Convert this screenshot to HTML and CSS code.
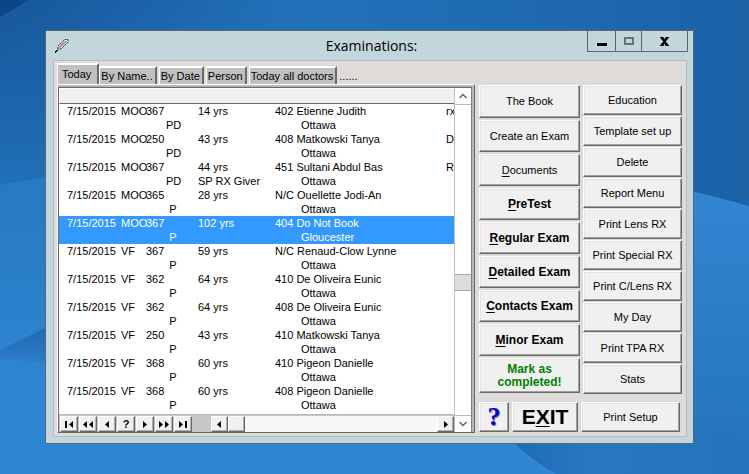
FILE: index.html
```html
<!DOCTYPE html>
<html lang="en">
<head>
<meta charset="utf-8">
<title>Examinations</title>
<link rel="stylesheet" href="styles.css">
</head>
<body>
<svg class="wallpaper" viewBox="0 0 749 474" preserveAspectRatio="none" aria-hidden="true">
  <defs>
    <linearGradient id="sky" x1="0" y1="0" x2="0" y2="1"><stop offset="0" stop-color="#17569a"/><stop offset=".38" stop-color="#2070b8"/><stop offset=".75" stop-color="#2d84d0"/><stop offset="1" stop-color="#2f87d3"/></linearGradient>
    <linearGradient id="top" x1="0" y1="0" x2="1" y2="0"><stop offset="0" stop-color="#2270b8" stop-opacity="0"/><stop offset=".4" stop-color="#2272ba"/><stop offset="1" stop-color="#1b62a7"/></linearGradient>
    <linearGradient id="right" x1="0" y1="0" x2="0" y2="1"><stop offset="0" stop-color="#3387d2"/><stop offset="1" stop-color="#2373bc"/></linearGradient>
    <linearGradient id="fold" x1="0" y1="0" x2="1" y2="0"><stop offset="0" stop-color="#1e69b2"/><stop offset=".35" stop-color="#2777c2"/><stop offset="1" stop-color="#2474bc"/></linearGradient>
    <linearGradient id="wedge" x1="0" y1="0" x2="0" y2="1"><stop offset="0" stop-color="#1b65ac"/><stop offset="1" stop-color="#2b7ec9"/></linearGradient>
  </defs>
  <rect width="749" height="474" fill="url(#sky)"/>
  <path d="M0 0H749V220H600V60H0Z" fill="url(#top)"/>
  <path d="M0 0H29L0 17Z" fill="#0d4686"/>
  <path d="M0 185L60 175V325L0 350Z" fill="#2d83ce" opacity=".5"/>
  <path d="M0 350L60 321V363L0 359Z" fill="url(#wedge)"/>
  <path d="M600 168Q690 190 749 206V474H600Z" fill="url(#right)"/>
  <path d="M500 430Q530 460 556 474H749V436Q690 428 650 428Z" fill="url(#fold)"/>
</svg>

<main class="window">
  <header class="titlebar">
    <svg class="pen" viewBox="0 0 14 14" aria-hidden="true">
      <path d="M0 14V12H1V11H3V12H2V13H1V14Z" fill="#111"/>
      <path d="M3 10V7L10 0.5H13V3L6 10Z" fill="#e6e4df" stroke="#222" stroke-width="1" stroke-dasharray="2 1"/>
      <path d="M4 9.500L11.500 2M5 7.500L10 2.500" stroke="#766e68"/>
    </svg>
    <h1>Examinations:</h1>
    <div class="controls">
      <button class="control minimize" aria-label="Minimize"><svg viewBox="0 0 10 10"><path d="M0 5h10v3H0z"/></svg></button>
      <button class="control maximize" aria-label="Maximize"><svg viewBox="0 0 10 10"><path d="M1 2h8v6H1z" fill="none" stroke="#66737a" stroke-width="2"/></svg></button>
      <button class="control close" aria-label="Close"><svg viewBox="0 0 10 10"><path d="M1 1h3l1 2 1-2h3v1H8v1L6 5l2 2v1h1v1H6L5 7 4 9H1V8h1V7l2-2-2-2V2H1z"/></svg></button>
    </div>
  </header>

  <section class="panel">
    <div class="left">
      <nav class="tabs">
        <button class="tab active">Today</button>
        <button class="tab">By Name..</button>
        <button class="tab">By Date</button>
        <button class="tab">Person</button>
        <button class="tab">Today all doctors</button>
        <span class="dots">......</span>
      </nav>
      <div class="pane">
        <div class="browser">
          <div class="content">
            <div class="list-head"></div>
            <table class="records">
              <colgroup><col class="c-date"><col class="c-doc"><col class="c-room"><col class="c-code"><col class="c-age"><col class="c-name"><col class="c-note"></colgroup>
              <tbody>
                <tr><td>7/15/2015</td><td>MOO</td><td>367</td><td></td><td>14 yrs</td><td>402 Etienne Judith</td><td>rx</td></tr>
                <tr><td></td><td></td><td></td><td>PD</td><td></td><td class="city">Ottawa</td><td></td></tr>
              </tbody>
              <tbody>
                <tr><td>7/15/2015</td><td>MOO</td><td>250</td><td></td><td>43 yrs</td><td>408 Matkowski Tanya</td><td>D</td></tr>
                <tr><td></td><td></td><td></td><td>PD</td><td></td><td class="city">Ottawa</td><td></td></tr>
              </tbody>
              <tbody>
                <tr><td>7/15/2015</td><td>MOO</td><td>367</td><td></td><td>44 yrs</td><td>451 Sultani Abdul Bas</td><td>R</td></tr>
                <tr><td></td><td></td><td></td><td>PD</td><td>SP RX Giver</td><td class="city">Ottawa</td><td></td></tr>
              </tbody>
              <tbody>
                <tr><td>7/15/2015</td><td>MOO</td><td>365</td><td></td><td>28 yrs</td><td>N/C Ouellette Jodi-An</td><td></td></tr>
                <tr><td></td><td></td><td></td><td>P</td><td></td><td class="city">Ottawa</td><td></td></tr>
              </tbody>
              <tbody class="selected">
                <tr><td>7/15/2015</td><td>MOO</td><td>367</td><td></td><td>102 yrs</td><td>404 Do Not Book</td><td></td></tr>
                <tr><td></td><td></td><td></td><td>P</td><td></td><td class="city">Gloucester</td><td></td></tr>
              </tbody>
              <tbody>
                <tr><td>7/15/2015</td><td>VF</td><td>367</td><td></td><td>59 yrs</td><td>N/C Renaud-Clow Lynne</td><td></td></tr>
                <tr><td></td><td></td><td></td><td>P</td><td></td><td class="city">Ottawa</td><td></td></tr>
              </tbody>
              <tbody>
                <tr><td>7/15/2015</td><td>VF</td><td>362</td><td></td><td>64 yrs</td><td>410 De Oliveira Eunic</td><td></td></tr>
                <tr><td></td><td></td><td></td><td>P</td><td></td><td class="city">Ottawa</td><td></td></tr>
              </tbody>
              <tbody>
                <tr><td>7/15/2015</td><td>VF</td><td>362</td><td></td><td>64 yrs</td><td>408 De Oliveira Eunic</td><td></td></tr>
                <tr><td></td><td></td><td></td><td>P</td><td></td><td class="city">Ottawa</td><td></td></tr>
              </tbody>
              <tbody>
                <tr><td>7/15/2015</td><td>VF</td><td>250</td><td></td><td>43 yrs</td><td>410 Matkowski Tanya</td><td></td></tr>
                <tr><td></td><td></td><td></td><td>P</td><td></td><td class="city">Ottawa</td><td></td></tr>
              </tbody>
              <tbody>
                <tr><td>7/15/2015</td><td>VF</td><td>368</td><td></td><td>60 yrs</td><td>410 Pigeon Danielle</td><td></td></tr>
                <tr><td></td><td></td><td></td><td>P</td><td></td><td class="city">Ottawa</td><td></td></tr>
              </tbody>
              <tbody>
                <tr><td>7/15/2015</td><td>VF</td><td>368</td><td></td><td>60 yrs</td><td>408 Pigeon Danielle</td><td></td></tr>
                <tr><td></td><td></td><td></td><td>P</td><td></td><td class="city">Ottawa</td><td></td></tr>
              </tbody>
            </table>
            <div class="navbar">
              <button class="nav" aria-label="First"><svg viewBox="0 0 10 7"><path d="M1 0h2v7H1zM9 0v7L5 3.500z"/></svg></button>
              <button class="nav" aria-label="Page up"><svg viewBox="0 0 10 7"><path d="M4 0v7L0 3.500zM10 0v7L6 3.500z"/></svg></button>
              <button class="nav" aria-label="Previous"><svg viewBox="0 0 10 7"><path d="M7 0v7L3 3.500z"/></svg></button>
              <button class="nav">?</button>
              <button class="nav" aria-label="Next"><svg viewBox="0 0 10 7"><path d="M3 0v7l4-3.500z"/></svg></button>
              <button class="nav" aria-label="Page down"><svg viewBox="0 0 10 7"><path d="M0 0v7l4-3.500zM6 0v7l4-3.500z"/></svg></button>
              <button class="nav" aria-label="Last"><svg viewBox="0 0 10 7"><path d="M1 0v7l4-3.500zM7 0h2v7H7z"/></svg></button>
              <div class="hscroll">
                <button class="nav" aria-label="Scroll left"><svg viewBox="0 0 10 7"><path d="M6 0v7L2 3.500z"/></svg></button>
                <div class="nav"></div>
                <button class="nav end" aria-label="Scroll right"><svg viewBox="0 0 10 7"><path d="M3 0v7l4-3.500z"/></svg></button>
              </div>
            </div>
          </div>
          <div class="vscroll">
            <button class="arrow up" aria-label="Scroll up"><svg viewBox="0 0 8 6"><path d="M0.500 5L4 1.500L7.500 5"/></svg></button>
            <div class="before"></div>
            <div class="thumb"></div>
            <div class="after"></div>
            <button class="arrow down" aria-label="Scroll down"><svg viewBox="0 0 8 6"><path d="M0.500 1L4 4.500L7.500 1"/></svg></button>
          </div>
        </div>
      </div>
    </div>

    <div class="actions">
      <div class="columns">
        <div class="exams">
          <button class="btn">The Book</button>
          <button class="btn">Create an Exam</button>
          <button class="btn"><span><u>D</u>ocuments</span></button>
          <button class="btn bold"><span><u>P</u>reTest</span></button>
          <button class="btn bold"><span><u>R</u>egular Exam</span></button>
          <button class="btn bold"><span><u>D</u>etailed Exam</span></button>
          <button class="btn bold"><span><u>C</u>ontacts Exam</span></button>
          <button class="btn bold"><span><u>M</u>inor Exam</span></button>
          <button class="btn bold mark">Mark as<br>completed!</button>
        </div>
        <div class="tools">
          <button class="btn">Education</button>
          <button class="btn">Template set up</button>
          <button class="btn">Delete</button>
          <button class="btn">Report Menu</button>
          <button class="btn">Print Lens RX</button>
          <button class="btn">Print Special RX</button>
          <button class="btn">Print C/Lens RX</button>
          <button class="btn">My Day</button>
          <button class="btn">Print TPA RX</button>
          <button class="btn">Stats</button>
        </div>
      </div>
      <div class="footer">
        <button class="btn help">?</button>
        <button class="btn exit"><span>E<u>X</u>IT</span></button>
        <button class="btn setup">Print Setup</button>
      </div>
    </div>
  </section>
</main>
</body>
</html>
```
FILE: styles.css
```css
* { box-sizing: border-box; }

body {
  margin: 0;
  padding: 30px 55px 30px 45px;
  background: #2d84d0;
  color: #000;
  font: 11px/14px "Liberation Sans", Arial, sans-serif;
}

button {
  margin: 0;
  padding: 0;
  color: inherit;
  font: inherit;
}

.wallpaper {
  position: fixed;
  inset: 0;
  z-index: -1;
  width: 100%;
  height: 100%;
}

.window {
  border: 1px solid #596670;
  background: #c3d6dc;
}

/* Title bar */
.titlebar {
  display: grid;
  grid-template-columns: 1fr auto 1fr;
  height: 29px;
  padding: 0 5px 0 9px;
}

.pen {
  width: 14px;
  height: 14px;
  margin-top: 8px;
}

h1 {
  margin: 0;
  font: 14px/30px "Open Sans", "Noto Sans", sans-serif;
}

.controls {
  display: flex;
  justify-self: end;
  height: 21px;
}

.control {
  display: flex;
  align-items: center;
  justify-content: center;
  border: solid #596670;
  border-width: 0 0 1px 1px;
  background: none;
}

.control svg { width: 10px; height: 10px; }
.minimize { width: 28px; }
.maximize { width: 26px; }
.close { width: 47px; border-right-width: 1px; }
.minimize svg { height: 10px; margin-top: 4px; }
.close svg { width: 11px; height: 11px; }

.panel {
  display: flex;
  gap: 4px;
  margin: 0 6px 6px 7px;
  padding: 2px 4px 3px 3px;
  border: 1px solid #b1bdca;
  background: #dfdbd8;
}

.left {
  flex: 1;
  min-width: 0;
}

/* Tabs */
.tabs {
  display: flex;
  align-items: flex-end;
  gap: 2px;
  height: 21px;
}

.tab {
  height: 18px;
  padding: 0 2px 1px 1px;
  border: solid #fff;
  border-width: 2px 2px 0 1px;
  border-right-color: #696969;
  background: #c0c0c0;
  line-height: 14px;
  white-space: nowrap;
}

.tab.active {
  height: 21px;
  margin-right: -2px;
  padding: 0 6px 2px 4px;
}

.dots { line-height: 16px; }

/* Record list */
.pane {
  padding: 2px 2px 0 0;
  border: 1px solid #fff;
  border-right-color: #696969;
  border-bottom-color: #696969;
  background: #b8b8b8;
}

.browser {
  display: flex;
  border: solid #696969;
  border-width: 1px 1px 0 1px;
  border-right-color: #808080;
  background: #fff;
}

.content {
  flex: 1;
  min-width: 0;
}

.list-head {
  height: 16px;
  border: solid #fff;
  border-width: 1px 0 1px 1px;
  border-bottom-color: #696969;
  background: #f0f0f0;
}

.records {
  width: 100%;
  table-layout: fixed;
  border-collapse: collapse;
}

.c-date { width: 62px; }
.c-doc { width: 25px; }
.c-room { width: 20px; }
.c-code { width: 14px; }
.c-age { width: 95px; }
.c-note { width: 8px; }

.records td {
  height: 14px;
  padding: 0;
  overflow: hidden;
  white-space: nowrap;
}

.records td:first-child { padding-left: 8px; }
.records td:nth-child(2) { overflow: visible; }
.records td:nth-child(4) { text-align: center; overflow: visible; }
.records td:nth-child(5) { padding-left: 18px; }
.records .city { padding-left: 26px; }

.selected { background: #3399ff; color: #fff; }

.navbar {
  display: flex;
  gap: 1px;
  height: 18px;
  margin-top: 2px;
  padding: 1px 0 0 1px;
  border-top: 1px solid #b8b8b8;
  background: #c6c6c6;
}

.nav {
  display: flex;
  align-items: center;
  justify-content: center;
  width: 18px;
  border: 1px solid #fff;
  border-right-color: #696969;
  border-bottom-color: #696969;
  background: #f0f0f0;
  box-shadow: inset -1px -1px #b0b0b0;
  font-weight: bold;
}

.nav svg { width: 10px; height: 7px; }

.hscroll {
  display: flex;
  flex: 1;
  margin-left: 18px;
  background: repeating-conic-gradient(#fff 0 25%, #efefef 0 50%) 0 0 / 2px 2px;
}

.hscroll .nav { width: 17px; }
.hscroll .end { margin-left: auto; }

.vscroll {
  display: flex;
  flex-direction: column;
  width: 17px;
  border-left: 1px solid #c0c0c0;
}

.arrow {
  display: flex;
  align-items: center;
  justify-content: center;
  height: 17px;
  border: 0 solid #b8b8b8;
  background: #fff;
}

.arrow svg {
  width: 8px;
  height: 6px;
  fill: none;
  stroke: #606060;
  stroke-width: 1.4;
}

.up { border-bottom-width: 1px; }
.down { border-top-width: 1px; }
.before { flex: 170; }
.after { flex: 124; }

.thumb {
  height: 17px;
  border: solid #a8a8a8;
  border-width: 1px 0;
  background: #dcdcdc;
}

/* Action buttons */
.actions {
  display: flex;
  flex-direction: column;
  justify-content: space-between;
  width: 203px;
  padding: 22px 0 1px;
}

.columns {
  display: grid;
  grid-template-columns: 101px 99px;
  gap: 3px;
}

.exams {
  display: grid;
  grid-template-rows: 33px repeat(7, 32px) 35px;
  gap: 2px;
}

.tools {
  display: grid;
  grid-auto-rows: 30px;
  gap: 1px;
}

.btn {
  border: 1px solid #fff;
  border-right-color: #696969;
  border-bottom-color: #696969;
  background: #f0f0f0;
  box-shadow: inset -1px -1px #a0a0a0, inset 1px 1px #e3e3e3;
  line-height: 13px;
}

.bold { font-size: 12px; font-weight: bold; }
.mark { color: #008000; }

.btn u {
  text-decoration: underline;
  text-decoration-thickness: 1px;
  text-underline-offset: 2px;
}

.footer {
  display: flex;
  gap: 3px;
  height: 30px;
  padding-right: 2px;
}

.help {
  width: 30px;
  color: #0000e0;
  font: bold 26px/26px "Liberation Serif", serif;
  text-shadow: 1px 1px #808080;
}

.exit {
  width: 66px;
  font-size: 21px;
  font-weight: bold;
  line-height: 24px;
}

.setup { flex: 1; }
```
